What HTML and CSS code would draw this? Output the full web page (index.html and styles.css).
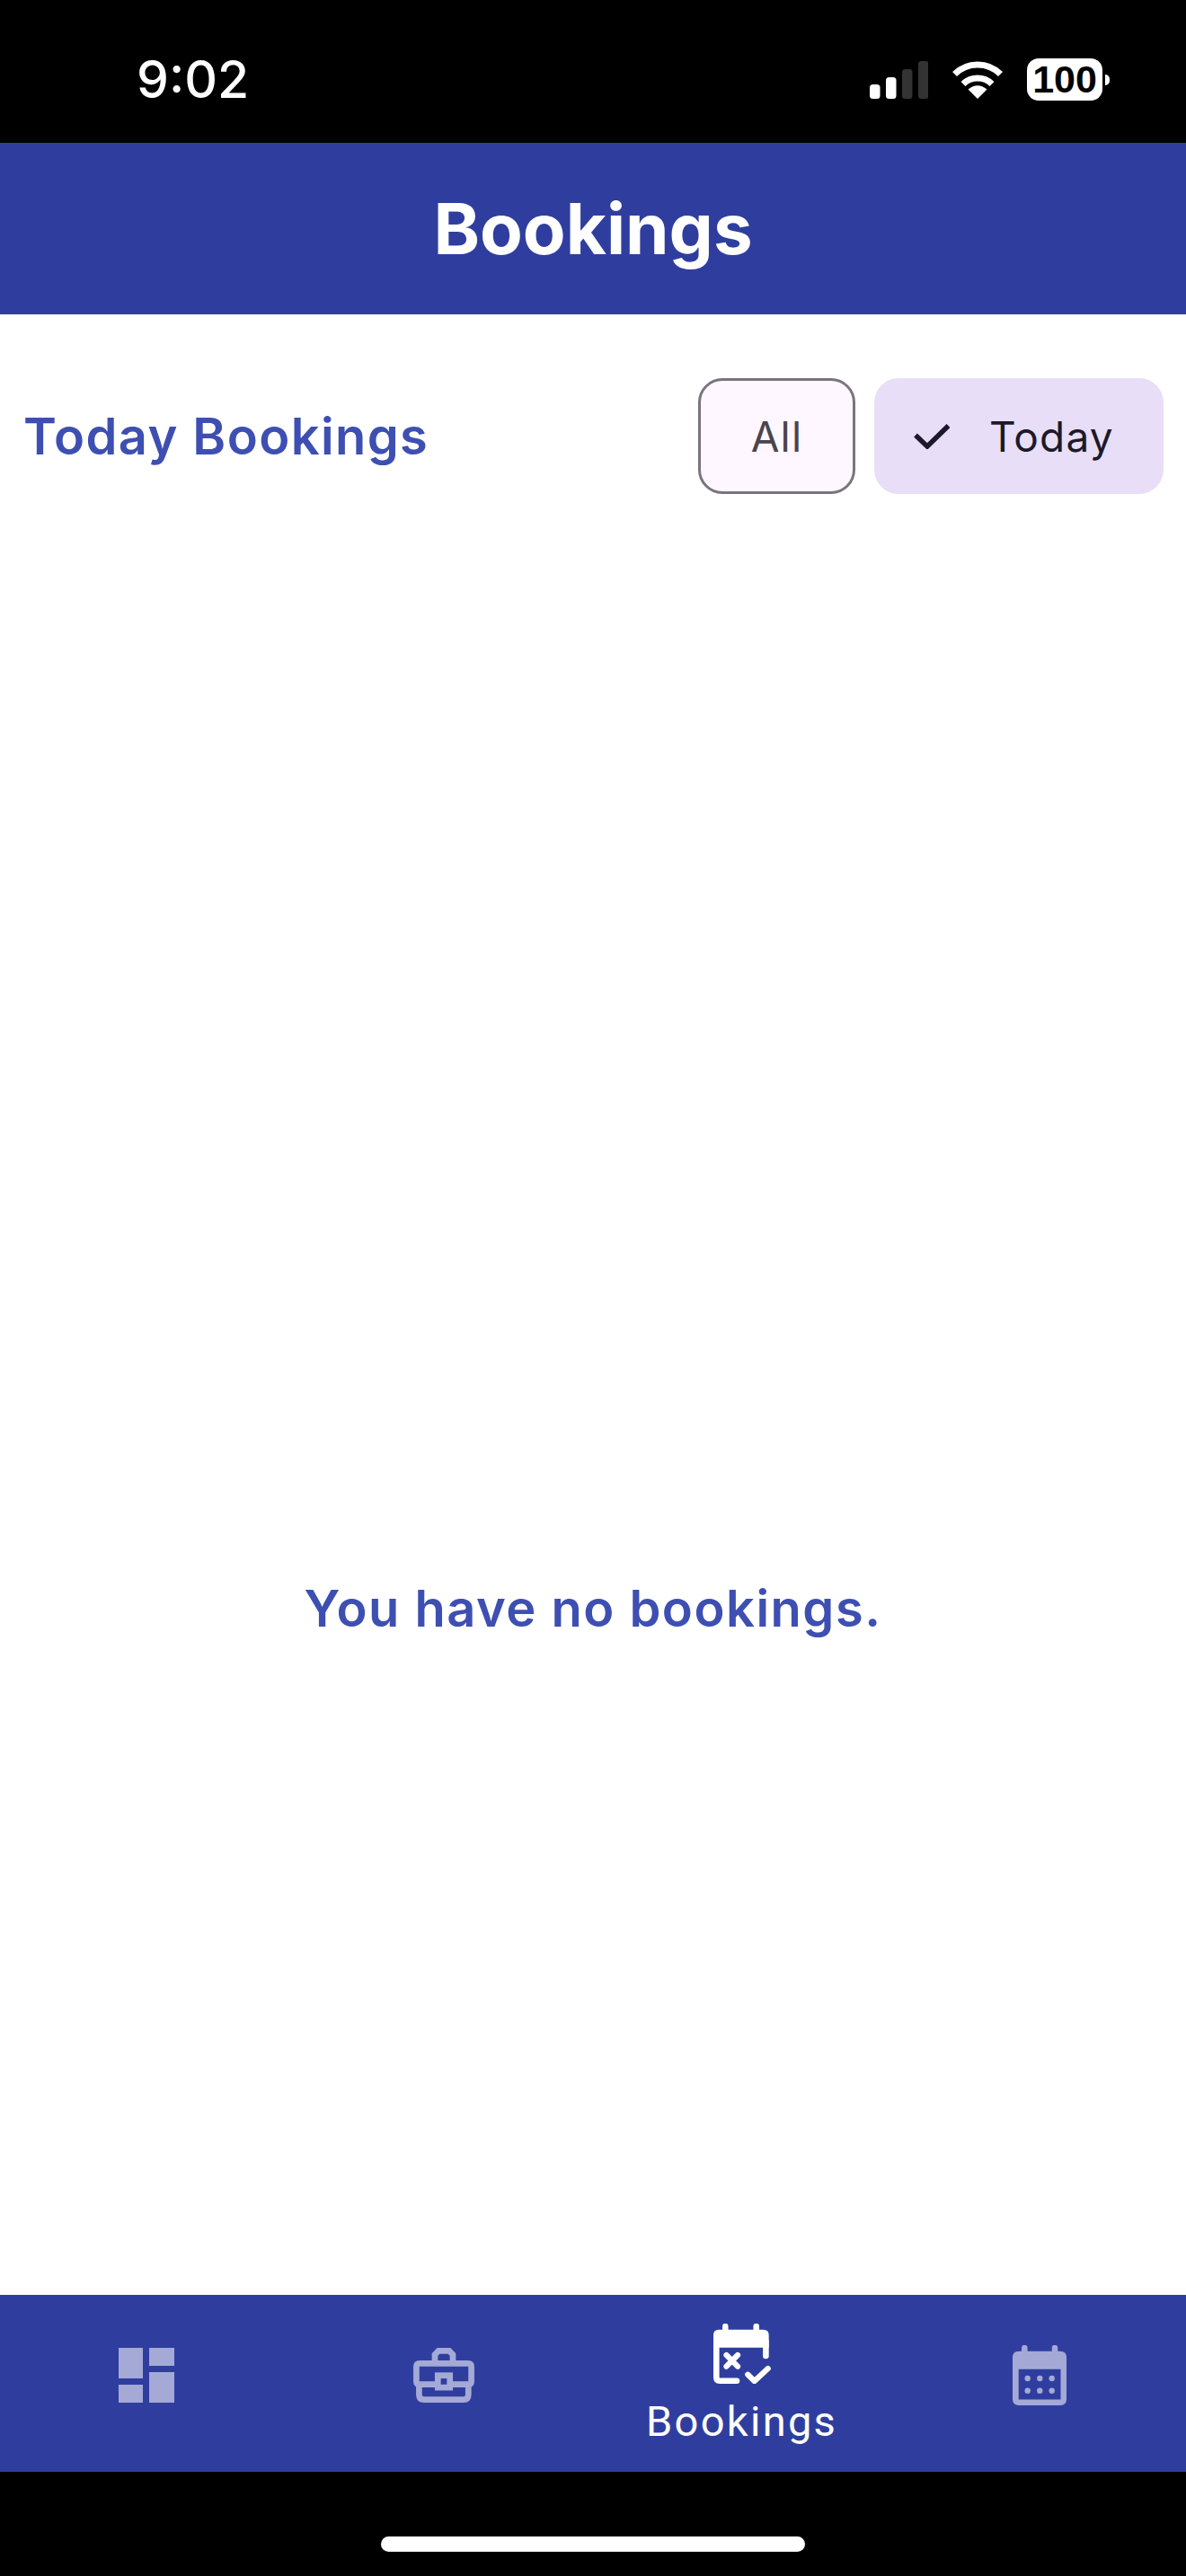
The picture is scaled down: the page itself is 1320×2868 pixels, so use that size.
FILE: index.html
```html
<!DOCTYPE html>
<html>
<head>
  <title>Bookings</title>
  <link rel="stylesheet" href="styles.css">
</head>
<body>

<div class="phone">

  <!-- Status bar -->
  <div class="status-bar">
    <span class="clock">9:02</span>
    <div class="status-icons">
      <svg class="signal" width="65" height="42" viewBox="0 0 65 42">
        <rect x="0" y="26" width="11.5" height="16" rx="3.5" fill="#fff"/>
        <rect x="18" y="18" width="11.5" height="24" rx="3.5" fill="#fff"/>
        <rect x="36" y="9" width="11.5" height="33" rx="3.5" fill="#333"/>
        <rect x="54" y="0" width="11.5" height="42" rx="3.5" fill="#333"/>
      </svg>
      <svg class="wifi" width="58" height="42" viewBox="0 0 58 42">
        <path d="M3.5 14.5A36 36 0 0 1 54.5 14.5" fill="none" stroke="#fff" stroke-width="7"/>
        <path d="M13 25.5A23 23 0 0 1 45 25.5" fill="none" stroke="#fff" stroke-width="7"/>
        <path d="M29 42L18.5 31.5Q29 23 39.5 31.5Z" fill="#fff"/>
      </svg>
      <div class="battery">
        <span class="battery-level">100</span>
        <span class="battery-nub"></span>
      </div>
    </div>
  </div>

  <!-- Header -->
  <div class="app-header">
    <h1>Bookings</h1>
  </div>

  <!-- Content -->
  <div class="content">
    <div class="toolbar">
      <h2>Today Bookings</h2>
      <div class="chips">
        <button type="button" class="chip">All</button>
        <button type="button" class="chip chip-selected">
          <svg width="40" height="28" viewBox="0 0 40 28">
            <path d="M2 12.5L15 25L38.5 2" fill="none" stroke="#1d192b" stroke-width="5.5"/>
          </svg>
          Today
        </button>
      </div>
    </div>
    <p class="empty-text">You have no bookings.</p>
  </div>

  <!-- Bottom navigation -->
  <div class="bottom-nav">
    <div class="nav-item">
      <div class="nav-icon">
        <svg width="62" height="61" viewBox="0 0 62 61" fill="#a4a9d6">
          <rect x="0" y="0" width="27" height="34"/>
          <rect x="34" y="0" width="28" height="20"/>
          <rect x="0" y="41" width="27" height="20"/>
          <rect x="34" y="27" width="28" height="34"/>
        </svg>
      </div>
    </div>
    <div class="nav-item">
      <div class="nav-icon">
        <svg width="68" height="61" viewBox="0 0 68 61" fill="none" stroke="#a4a9d6" stroke-width="6.7">
          <path d="M24 15V7.5L28 3.4H40L44 7.5V15"/>
          <path d="M24 40.7H6.5Q3.4 40.7 3.4 37.5V21Q3.4 17.3 7 17.3H61Q64.6 17.3 64.6 21V37.5Q64.6 40.7 61.5 40.7H44"/>
          <path d="M6.4 40V52Q6.4 57.6 12 57.6H56Q61.3 57.6 61.3 52V40"/>
          <rect x="27.3" y="30.7" width="13.4" height="13.4"/>
        </svg>
      </div>
    </div>
    <div class="nav-item nav-item-active">
      <div class="nav-icon">
        <svg width="64" height="67" viewBox="0 0 64 67">
          <path d="M13.3 3V8M47.7 3V8" stroke="#fff" stroke-width="6.5" stroke-linecap="round" fill="none"/>
          <path d="M6 6.7H55.5Q61.7 6.7 61.7 13V26.7H6.7V26.7H0V13Q0 6.7 6 6.7Z" fill="#fff"/>
          <path d="M3.3 20V60Q3.3 63.7 7 63.7H26M58.4 20V36" stroke="#fff" stroke-width="6.6" stroke-linecap="round" fill="none"/>
          <path d="M14.5 35L27 47.7M27 35L14.5 47.7" stroke="#fff" stroke-width="6.2" stroke-linecap="round" fill="none"/>
          <path d="M38.3 56.7L45.7 64L60.7 50" stroke="#fff" stroke-width="6.2" stroke-linecap="round" stroke-linejoin="round" fill="none"/>
        </svg>
      </div>
      <span class="nav-label">Bookings</span>
    </div>
    <div class="nav-item">
      <div class="nav-icon">
        <svg width="60" height="67" viewBox="0 0 60 67" fill="#a4a9d6">
          <path d="M13.3 3V8M47 3V8" stroke="#a4a9d6" stroke-width="6.5" stroke-linecap="round" fill="none"/>
          <path fill-rule="evenodd" d="M7 6.7H53Q60 6.7 60 13.7V60Q60 67 53 67H7Q0 67 0 60V13.7Q0 6.7 7 6.7ZM6.7 26.7V60.5H53.5V26.7Z"/>
          <circle cx="16.7" cy="37" r="3.2"/>
          <circle cx="30.3" cy="37" r="3.2"/>
          <circle cx="43.7" cy="37" r="3.2"/>
          <circle cx="16.7" cy="50.7" r="3.2"/>
          <circle cx="30.3" cy="50.7" r="3.2"/>
          <circle cx="43.7" cy="50.7" r="3.2"/>
        </svg>
      </div>
    </div>
  </div>

  <!-- Home indicator -->
  <div class="home-area">
    <div class="home-indicator"></div>
  </div>

</div>

</body>
</html>
```

FILE: styles.css
```css
body {
  margin: 0;
  padding: 0;
  background-color: #000;
  font-family: Inter, sans-serif;
}

.phone {
  display: flex;
  flex-direction: column;
  width: 1320px;
  height: 2868px;
  overflow: hidden;
  background-color: #fff;
}

/* status bar */
.status-bar {
  display: flex;
  justify-content: space-between;
  align-items: center;
  height: 159px;
  padding: 0 85px 0 152px;
  box-sizing: border-box;
  background-color: #000;
  color: #fff;
}

.clock {
  font-size: 57px;
  font-weight: 500;
  line-height: 1;
  margin-top: 17px;
}

.status-icons {
  display: flex;
  align-items: center;
  gap: 26px;
  margin-top: 18px;
}

.battery {
  display: flex;
  align-items: center;
  gap: 3px;
}

.battery-level {
  display: block;
  width: 84px;
  height: 47px;
  border-radius: 13px;
  background-color: #fff;
  color: #000;
  font-family: "Liberation Sans", sans-serif;
  font-size: 43px;
  font-weight: 700;
  line-height: 47px;
  text-align: center;
}

.battery-nub {
  display: block;
  width: 5px;
  height: 12px;
  border-radius: 0 5px 5px 0;
  background-color: #fff;
}

/* header */
.app-header {
  display: flex;
  justify-content: center;
  align-items: center;
  height: 191px;
  background-color: #2f3e9e;
}

.app-header h1 {
  margin: 0;
  color: #fff;
  font-size: 78px;
  font-weight: 700;
}

/* content */
.content {
  flex: 1;
  display: flex;
  flex-direction: column;
}

.toolbar {
  display: flex;
  justify-content: space-between;
  align-items: center;
  padding: 71px 25px 0 26px;
}

.toolbar h2 {
  margin: 0;
  color: #3e4fb2;
  font-size: 56px;
  font-weight: 600;
  letter-spacing: 1.4px;
}

.chips {
  display: flex;
  gap: 21px;
}

.chip {
  display: flex;
  align-items: center;
  justify-content: center;
  width: 175px;
  height: 129px;
  padding: 0;
  border: 3px solid #79747e;
  border-radius: 27px;
  background-color: #fef7ff;
  color: #49454f;
  font-family: Inter, sans-serif;
  font-size: 46px;
  letter-spacing: 1.2px;
}

.chip-selected {
  justify-content: flex-start;
  gap: 44px;
  width: 322px;
  padding-left: 44px;
  border: none;
  background-color: #e8def8;
  color: #1d192b;
}

.empty-text {
  margin: 0;
  padding-top: 1207px;
  color: #3e4fb2;
  font-size: 56px;
  font-weight: 600;
  letter-spacing: 1.5px;
  text-align: center;
}

/* bottom navigation */
.bottom-nav {
  display: grid;
  grid-template-columns: repeat(4, 300px);
  gap: 31.3px;
  height: 197px;
  padding-left: 13px;
  background-color: #2f3e9e;
}

.nav-item {
  display: flex;
  flex-direction: column;
  align-items: center;
  padding-top: 48px;
}

.nav-item-active {
  padding-top: 24px;
}

.nav-icon {
  display: flex;
  align-items: center;
  justify-content: center;
  height: 82px;
}

.nav-label {
  margin-top: 9px;
  color: #fff;
  font-family: Roboto, sans-serif;
  font-size: 47px;
  line-height: 52px;
  letter-spacing: 2.3px;
}

/* home indicator */
.home-area {
  display: flex;
  justify-content: center;
  height: 116px;
  background-color: #000;
}

.home-indicator {
  width: 472px;
  height: 17px;
  margin-top: 72px;
  border-radius: 9px;
  background-color: #fff;
}
```
